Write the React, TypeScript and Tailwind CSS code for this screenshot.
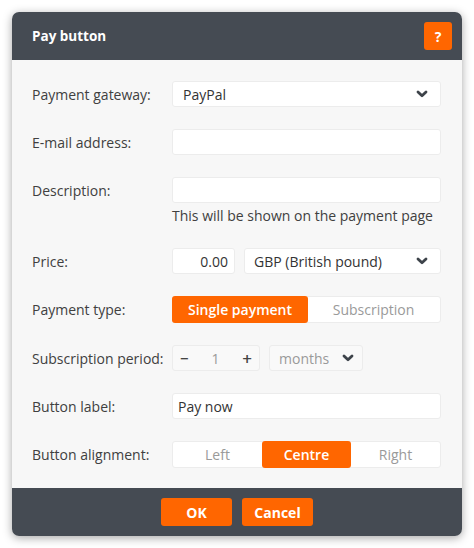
import React, { useState } from "react";

function Chevron({ className = "" }: { className?: string }) {
    return (
        <svg width="12" height="8" viewBox="0 0 12 8" className={className}>
            <polyline points="2,2 6,5.8 10,2" fill="none" stroke="currentColor" strokeWidth="2.8" strokeLinecap="round" strokeLinejoin="round" />
        </svg>
    );
}

function Row({ label, children, h = "h-[26px]" }: { label: string; children: React.ReactNode; h?: string }) {
    return (
        <div className={`flex items-center ${h}`}>
            <label className="w-[140px] shrink-0 text-[14px] text-[#404040]">{label}</label>
            <div className="flex-1 h-full flex">{children}</div>
        </div>
    );
}

const inputCls =
    "h-full bg-white border border-[#ececec] rounded-[3px] text-[14px] text-[#333] outline-none";

export default function App() {
    const [type, setType] = useState("single");
    const [align, setAlign] = useState("centre");
    const [label, setLabel] = useState("Pay now");

    return (
        <div className="min-h-screen bg-white p-3" style={{ fontFamily: "'Open Sans', sans-serif" }}>
            <div className="w-[450px] rounded-[7px] overflow-hidden shadow-[0_2px_10px_rgba(0,0,0,0.35)]">
                {/* Header */}
                <div className="h-12 bg-[#454b53] flex items-center justify-between pl-5 pr-[10px]">
                    <h1 className="text-[13.5px] font-bold text-white">Pay button</h1>
                    <button className="w-7 h-7 rounded-[3px] bg-[#ff6600] text-white font-bold text-[14px] flex items-center justify-center">
                        ?
                    </button>
                </div>

                {/* Body */}
                <div className="bg-[#f7f7f7] pt-[21px] pb-5 pl-5 pr-[21px] flex flex-col gap-[22px]">
                    <Row label="Payment gateway:">
                        <div className={`${inputCls} w-full flex items-center justify-between pl-[10px] pr-[12px]`}>
                            <span>PayPal</span>
                            <Chevron className="text-[#3d434a]" />
                        </div>
                    </Row>

                    <Row label="E-mail address:">
                        <input className={`${inputCls} w-full px-[10px]`} />
                    </Row>

                    <div className="flex flex-col">
                        <Row label="Description:">
                            <input className={`${inputCls} w-full px-[10px]`} />
                        </Row>
                        <p className="ml-[140px] mt-[3px] leading-5 text-[14px] text-[#404040]">
                            This will be shown on the payment page
                        </p>
                    </div>

                    <Row label="Price:">
                        <div className="flex gap-[9px] w-full h-full">
                            <input defaultValue="0.00" className={`${inputCls} w-[63px] text-right pr-[6px]`} />
                            <div className={`${inputCls} flex-1 flex items-center justify-between pl-[9px] pr-[12px]`}>
                                <span>GBP (British pound)</span>
                                <Chevron className="text-[#3d434a]" />
                            </div>
                        </div>
                    </Row>

                    <Row label="Payment type:" h="h-[27px]">
                        <div className="flex w-full h-full bg-white border border-[#ececec] rounded-[3px] text-[14px]">
                            <button
                                onClick={() => setType("single")}
                                className={`w-[136px] -m-px h-[calc(100%+2px)] rounded-[3px] ${type === "single" ? "bg-[#ff6600] text-white font-semibold" : "text-[#9a9a9a]"}`}
                            >
                                Single payment
                            </button>
                            <button
                                onClick={() => setType("sub")}
                                className={`flex-1 rounded-[3px] ${type === "sub" ? "bg-[#ff6600] text-white font-semibold" : "text-[#9a9a9a]"}`}
                            >
                                Subscription
                            </button>
                        </div>
                    </Row>

                    <Row label="Subscription period:">
                        <div className="flex gap-[9px] h-full">
                            <div className="w-[88px] h-full border border-[#ececec] rounded-[3px] bg-[#f9f9f9] flex items-center justify-between px-[7px] text-[14px]">
                                <span className="text-[#444] font-semibold text-[15px] leading-none">−</span>
                                <span className="text-[#9a9a9a]">1</span>
                                <span className="text-[#444] font-semibold text-[17px] leading-none">+</span>
                            </div>
                            <div className="w-[94px] h-full border border-[#ececec] rounded-[3px] bg-[#f9f9f9] flex items-center justify-between pl-[9px] pr-[8px] text-[14px] text-[#9a9a9a]">
                                <span>months</span>
                                <Chevron className="text-[#3d434a]" />
                            </div>
                        </div>
                    </Row>

                    <Row label="Button label:">
                        <input
                            value={label}
                            onChange={(e) => setLabel(e.target.value)}
                            className={`${inputCls} w-full px-[5px]`}
                        />
                    </Row>

                    <Row label="Button alignment:" h="h-[27px]">
                        <div className="grid grid-cols-3 w-full h-full bg-white border border-[#ececec] rounded-[3px] text-[14px]">
                            {[
                                ["left", "Left"],
                                ["centre", "Centre"],
                                ["right", "Right"],
                            ].map(([k, t]) => (
                                <button
                                    key={k}
                                    onClick={() => setAlign(k)}
                                    className={`-my-px h-[calc(100%+2px)] rounded-[3px] ${align === k ? "bg-[#ff6600] text-white font-semibold" : "text-[#9a9a9a]"}`}
                                >
                                    {t}
                                </button>
                            ))}
                        </div>
                    </Row>
                </div>

                {/* Footer */}
                <div className="h-12 bg-[#454b53] flex items-center justify-center gap-[10px]">
                    <button className="w-[71px] h-7 rounded-[3px] bg-[#ff6600] text-white font-bold text-[14px]">OK</button>
                    <button className="w-[71px] h-7 rounded-[3px] bg-[#ff6600] text-white font-bold text-[14px]">Cancel</button>
                </div>
            </div>
        </div>
    );
}
